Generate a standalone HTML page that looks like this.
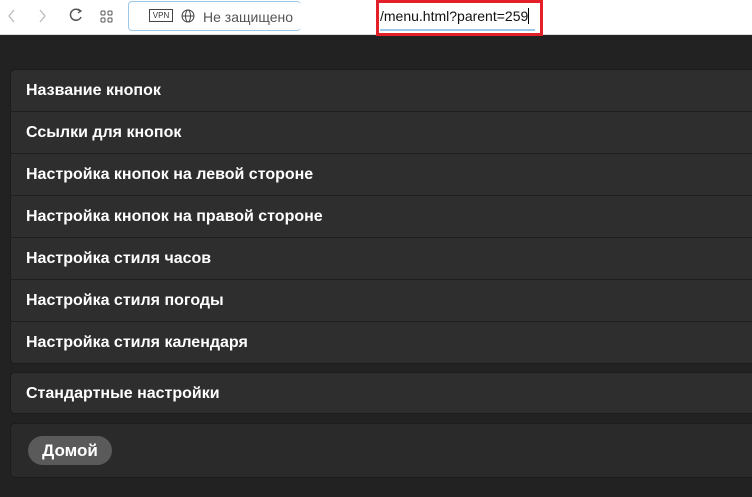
<!DOCTYPE html><html><head><meta charset="utf-8"><style>
body{margin:0;width:752px;height:497px;overflow:hidden;background:#222;font-family:"Liberation Sans",sans-serif;position:relative}
.bar{position:absolute;left:0;top:0;width:752px;height:34px;background:#fff;border-bottom:1px solid #ddd}
.grp{position:absolute;left:10px;width:760px;background:#2e2e2e;border-radius:5px;border:1px solid #1c1c1c;box-sizing:border-box}
.row{height:42px;line-height:41px;border-bottom:1px solid #1e1e1e;box-sizing:border-box;padding-left:15px;color:#fff;font-weight:bold;font-size:16px}
.row:last-child{border-bottom:none}
.t{position:absolute;font-size:13px;color:#555}
</style></head><body>
<div class="bar">
<svg style="position:absolute;left:0;top:0" width="130" height="34"><path d="M14 10 L9 16 L14 22" stroke="#bbb" fill="none" stroke-width="1.3"/><path d="M40 10 L45 16 L40 22" stroke="#bbb" fill="none" stroke-width="1.3"/><path d="M80 11 A5.5 5.5 0 1 0 81 17" stroke="#555" fill="none" stroke-width="1.5"/><path d="M78 9 L81 11 L78 13" stroke="#555" fill="none" stroke-width="1.3"/><rect x="101" y="11" width="4" height="4" rx="1" stroke="#555" fill="none"/><rect x="108" y="11" width="4" height="4" rx="1" stroke="#555" fill="none"/><rect x="101" y="18" width="4" height="4" rx="1" stroke="#555" fill="none"/><rect x="108" y="18" width="4" height="4" rx="1" stroke="#555" fill="none"/></svg>
<div style="position:absolute;left:128px;top:1px;width:172px;height:28px;border:1px solid #9cc8e8;border-radius:4px;border-right:none"></div>
<div style="position:absolute;left:149px;top:9px;width:22px;height:11px;border:1px solid #444;font-size:8px;line-height:11px;text-align:center;color:#333">VPN</div>
<svg style="position:absolute;left:181px;top:9px" width="14" height="14"><circle cx="7" cy="7" r="6" stroke="#444" fill="none"/><ellipse cx="7" cy="7" rx="2.5" ry="6" stroke="#444" fill="none"/><path d="M1 7H13" stroke="#444"/></svg>
<div class="t" style="left:203px;top:9px;font-size:14px">Не защищено</div>
<div style="position:absolute;left:376px;top:0;width:167px;height:36px;border:3px solid #e3202a;box-sizing:border-box;background:#fff"></div>
<div style="position:absolute;left:380px;top:8px;font-size:14px;color:#111">/menu.html?parent=259<span style="display:inline-block;width:1px;height:16px;background:#000;vertical-align:-3px"></span></div>
<div style="position:absolute;left:380px;top:29px;width:155px;height:2px;background:#9cc8e8"></div>
</div>
<div class="grp" style="top:69px;height:295px">
<div class="row">Название кнопок</div><div class="row">Ссылки для кнопок</div><div class="row">Настройка кнопок на левой стороне</div><div class="row">Настройка кнопок на правой стороне</div><div class="row">Настройка стиля часов</div><div class="row">Настройка стиля погоды</div><div class="row">Настройка стиля календаря</div>
</div>
<div class="grp" style="top:372px;height:42px"><div class="row">Стандартные настройки</div></div>
<div class="grp" style="top:423px;height:55px;background:#2a2a2a">
<div style="position:absolute;left:17px;top:12px;width:84px;height:29px;border-radius:15px;background:#5a5a5a;color:#fff;font-weight:bold;font-size:17px;line-height:29px;text-align:center">Домой</div>
</div>
</body></html>
